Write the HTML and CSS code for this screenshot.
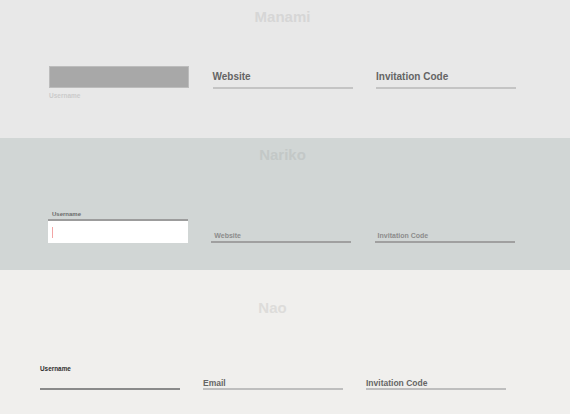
FILE: index.html
```html
<!DOCTYPE html>
<html>
<head>
<meta charset="utf-8">
<link rel="stylesheet" href="styles.css">
</head>
<body>
<section class="panel manami">
  <h2 class="title">Manami</h2>
  <div class="row">
    <div class="field user-m">
      <div class="filled-box"></div>
      <div class="under-label">Username</div>
    </div>
    <div class="field line-m"><span>Website</span></div>
    <div class="field line-m"><span>Invitation Code</span></div>
  </div>
</section>
<section class="panel nariko">
  <h2 class="title">Nariko</h2>
  <div class="row">
    <div class="field user-n">
      <div class="top-label">Username</div>
      <div class="white-box"><span class="caret"></span></div>
    </div>
    <div class="field line-n"><span>Website</span></div>
    <div class="field line-n"><span>Invitation Code</span></div>
  </div>
</section>
<section class="panel nao">
  <h2 class="title">Nao</h2>
  <div class="row">
    <div class="field user-o">
      <div class="top-label">Username</div>
      <div class="input-line"></div>
    </div>
    <div class="field line-o"><span>Email</span></div>
    <div class="field line-o"><span>Invitation Code</span></div>
  </div>
</section>
</body>
</html>
```

FILE: styles.css
```css
* { box-sizing: border-box; }
html, body { margin: 0; padding: 0; }
body {
  width: 570px;
  height: 414px;
  overflow: hidden;
  font-family: "Liberation Sans", Arial, sans-serif;
}
.panel { display: flex; flex-direction: column; }
.title {
  margin: 0;
  font-size: 15px;
  line-height: 18px;
  font-weight: bold;
  text-align: center;
  padding-right: 5px;
}
.row { display: flex; }
.field { width: 140px; flex: none; }

/* Manami */
.manami { height: 138px; background: #e8e8e8; padding-top: 7.5px; }
.manami .title { color: #d6d6d6; }
.manami .row { margin-top: 40.5px; padding-left: 49px; gap: 23.5px; align-items: flex-start; }
.filled-box { height: 22px; background: #a8a8a8; border: 1px solid #bcbcbc; }
.under-label { margin-top: 3.5px; font-size: 6.5px; line-height: 8px; font-weight: bold; color: #cbcbcb; }
.line-m {
  padding-top: 5px; padding-bottom: 4px;
  font-size: 10px; line-height: 12px; font-weight: bold; color: #646464;
  border-bottom: 2px solid #c4c4c4;
}

/* Nariko */
.nariko { height: 132px; background: #d1d6d5; padding-top: 7.5px; }
.nariko .title { color: #c3c8c7; }
.nariko .row { margin-top: 46.5px; padding-left: 48px; gap: 23.3px; align-items: flex-end; }
.user-n .top-label { font-size: 6px; line-height: 8px; font-weight: bold; color: #6a6a6a; padding-left: 4px; margin-bottom: 1px; }
.white-box {
  height: 24px; background: #fff; border-top: 2px solid #9c9c9c;
  display: flex; align-items: center; padding-left: 4px;
}
.caret { width: 1px; height: 11px; background: #f2a5a5; }
.line-n {
  padding-left: 3px; padding-bottom: 1px;
  font-size: 7px; line-height: 9px; font-weight: bold; color: #8c8c8c;
  border-bottom: 2px solid #a0a0a0;
}

/* Nao */
.nao { height: 144px; background: #f0efed; padding-top: 29px; }
.nao .title { color: #dddcda; padding-right: 25px; }
.nao .row { margin-top: 47.5px; padding-left: 40px; gap: 23px; align-items: flex-end; }
.user-o .top-label { font-size: 6.4px; line-height: 8px; font-weight: bold; color: #2e2e2e; }
.input-line { height: 17.5px; border-bottom: 2px solid #8a8a8a; }
.line-o {
  font-size: 8.5px; line-height: 10px; font-weight: bold; color: #666;
  border-bottom: 2px solid #bebebe;
}
```
